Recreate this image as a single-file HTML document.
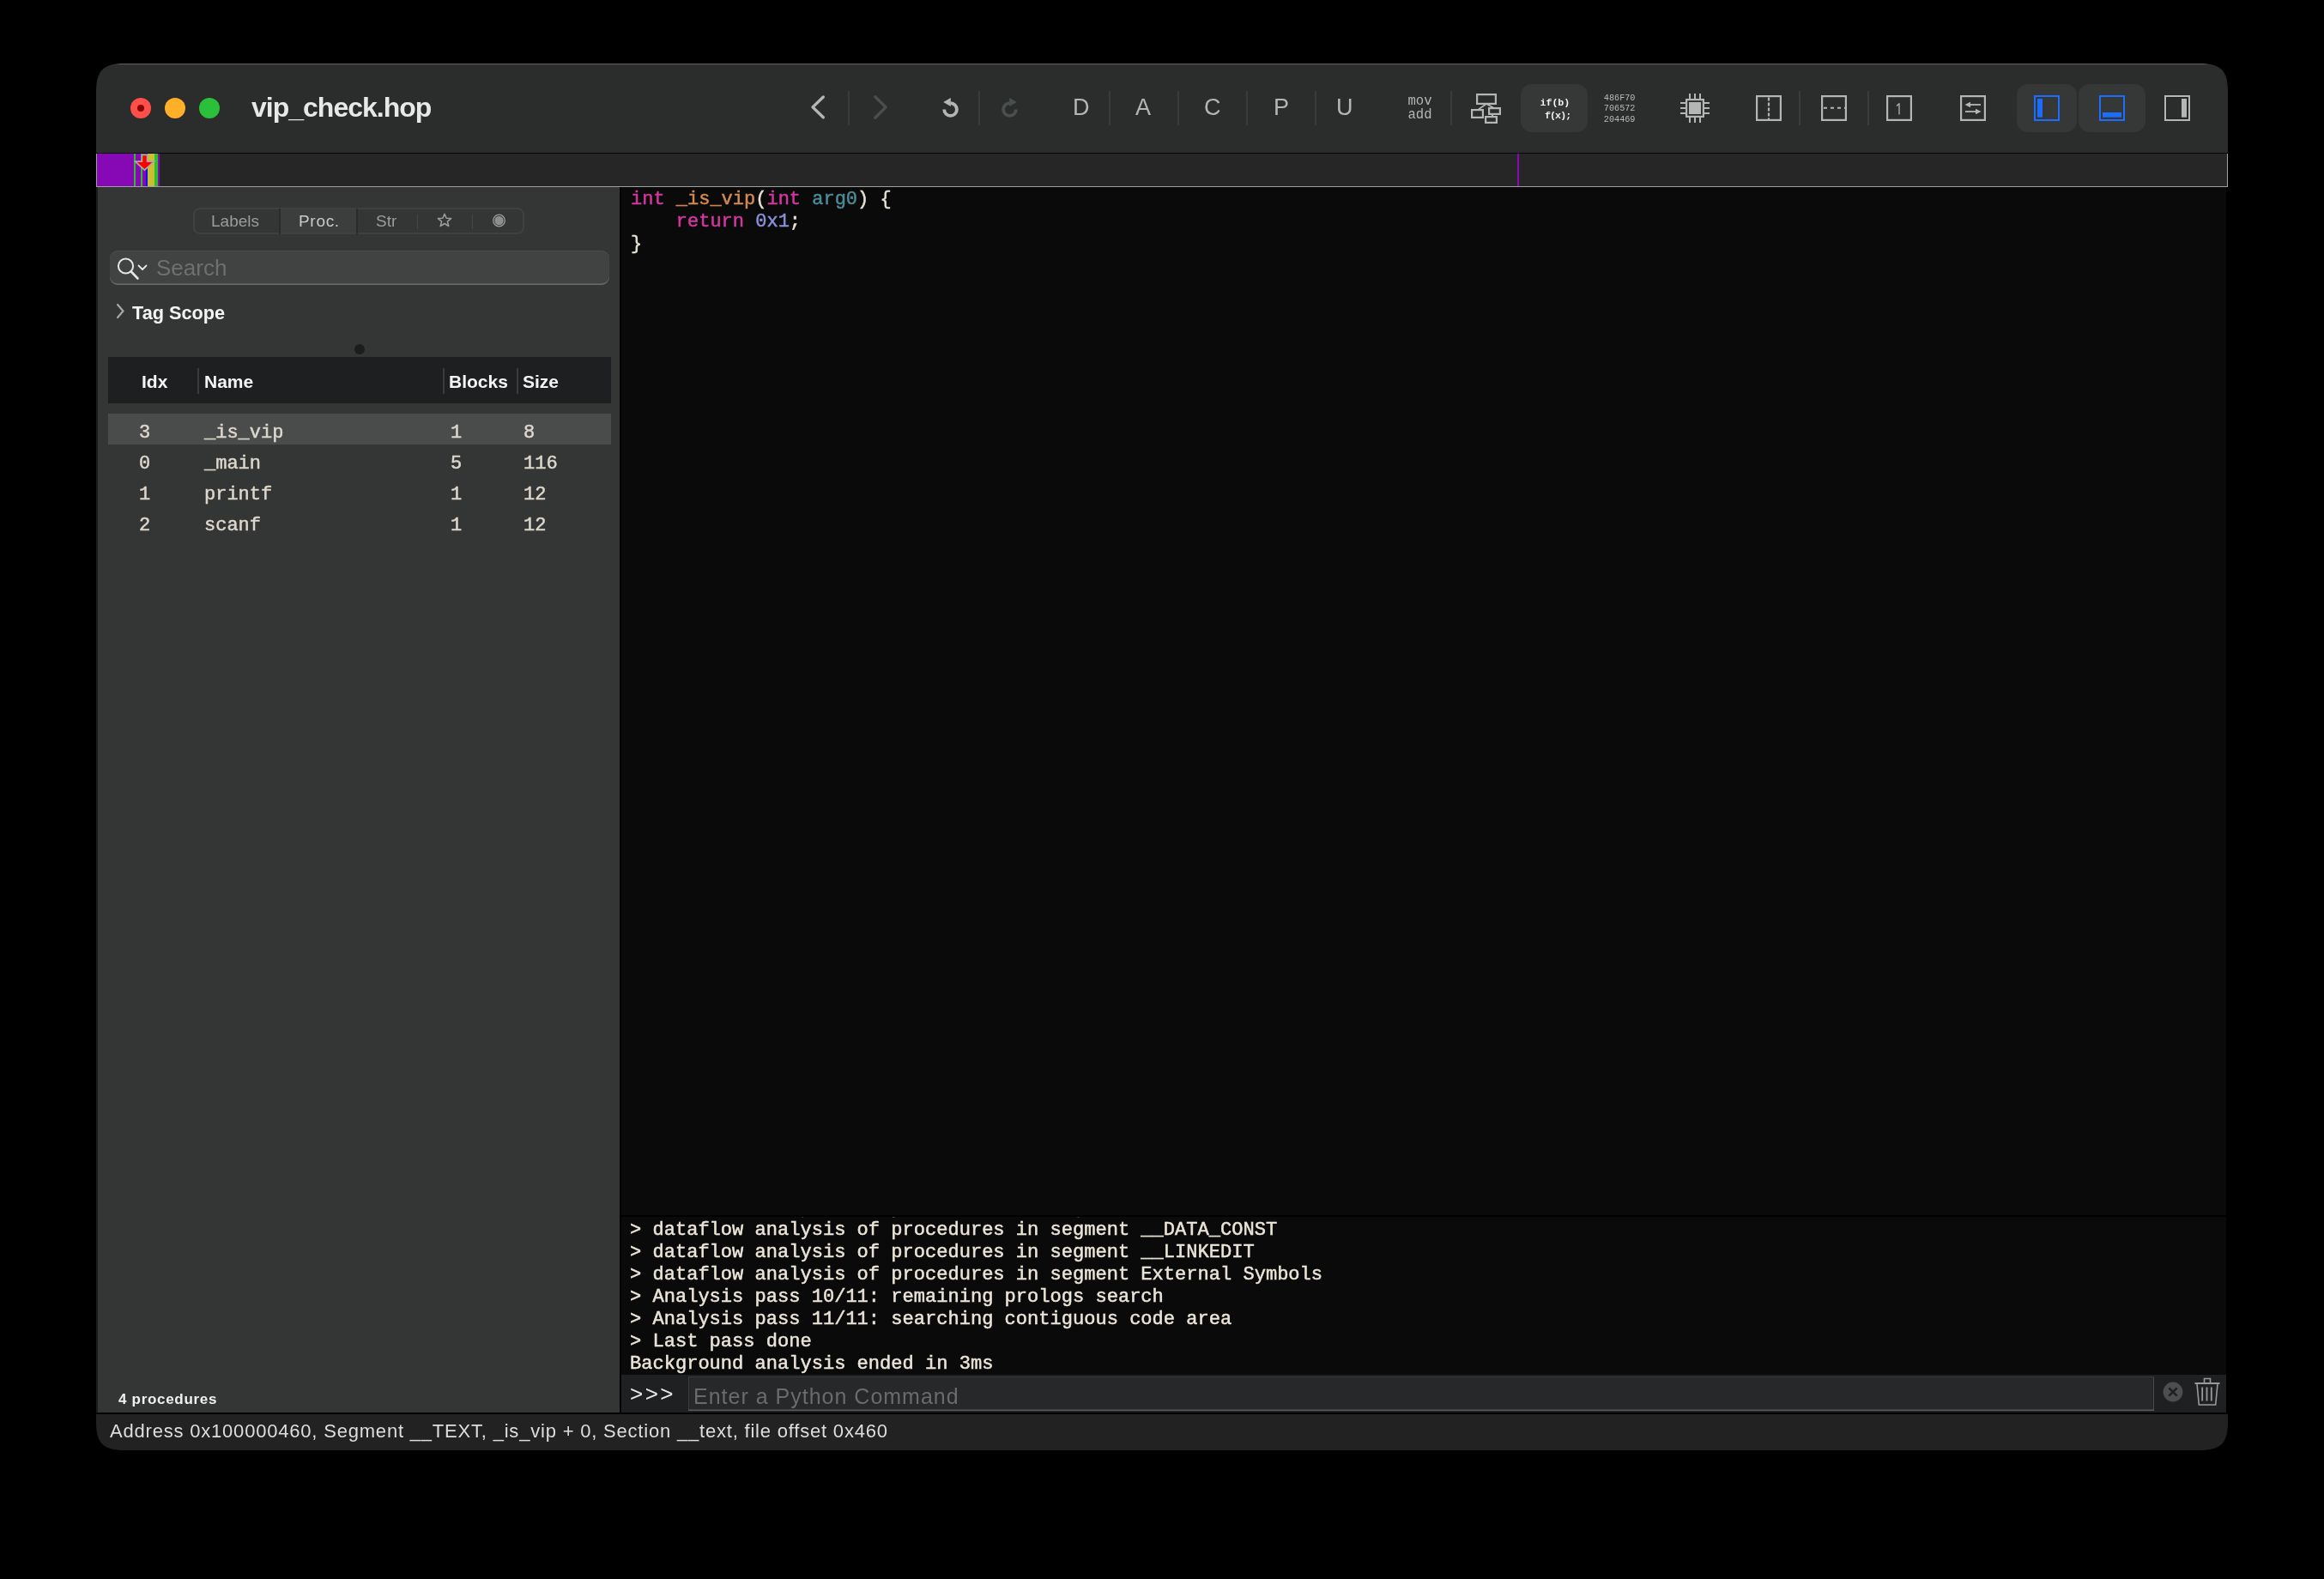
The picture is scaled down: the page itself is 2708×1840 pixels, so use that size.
<!DOCTYPE html>
<html><head><meta charset="utf-8"><style>
html,body{margin:0;padding:0;background:#000;width:2708px;height:1840px;overflow:hidden;}
body>div,body>svg{position:absolute;}
#win div,#win svg{position:absolute;}
</style></head><body>
<div id="win" style="left:0;top:0;width:2708px;height:1840px;will-change:transform;clip-path:path(&quot;M145,74 H2563 C2587.75,74 2596,82.25 2596,107 V1657 C2596,1681.75 2587.75,1690 2563,1690 H145 C120.25,1690 112,1681.75 112,1657 V107 C112,82.25 120.25,74 145,74 Z&quot;);">
<div style="left:112px;top:74px;width:2484px;height:1616px;background:#2b2c2c;"></div>
<div style="left:112px;top:178px;width:2484px;height:1px;background:#000;"></div>
<div style="left:112px;top:179px;width:2484px;height:39px;background:#262626;"></div>
<div style="left:112px;top:217px;width:2484px;height:1px;background:#a0a0a0;"></div>
<div style="left:112px;top:179px;width:1px;height:39px;background:#a0a0a0;"></div>
<div style="left:2595px;top:179px;width:1px;height:39px;background:#a0a0a0;"></div>
<div style="left:112px;top:218px;width:610px;height:1428px;background:#343535;"></div>
<div style="left:112px;top:218px;width:2px;height:1428px;background:#1c1c1d;"></div>
<div style="left:722px;top:218px;width:2px;height:1428px;background:#000;"></div>
<div style="left:724px;top:218px;width:1870px;height:1198px;background:#0a0a0a;"></div>
<div style="left:2594px;top:218px;width:2px;height:1430px;background:#000;"></div>
<div style="left:724px;top:1416px;width:1870px;height:2px;background:#000;"></div>
<div style="left:724px;top:1418px;width:1870px;height:184px;background:#0a0a0a;"></div>
<div style="left:724px;top:1602px;width:1870px;height:44px;background:#1f2022;"></div>
<div style="left:112px;top:1646px;width:2484px;height:2px;background:#000;"></div>
<div style="left:112px;top:1648px;width:2484px;height:42px;background:#222222;"></div>
<div style="left:152px;top:114px;width:24px;height:24px;border-radius:50%;background:#ff4f4b;"></div>
<div style="left:192px;top:114px;width:24px;height:24px;border-radius:50%;background:#ffb028;"></div>
<div style="left:232px;top:114px;width:24px;height:24px;border-radius:50%;background:#2bc03a;"></div>
<div style="left:160px;top:122px;width:8px;height:8px;border-radius:50%;background:#8a0000;"></div>
<div style="left:293px;top:100.91px;line-height:48px;font-family:'Liberation Sans', sans-serif;font-size:32px;font-weight:700;color:#e8e8e8;white-space:pre;letter-spacing:-1px;">vip_check.hop</div>
<div style="left:112px;top:74px;width:2484px;height:1616px;border-radius:20px;box-shadow:inset 0 1px 0 rgba(255,255,255,0.16), inset 0 2px 0 rgba(255,255,255,0.05);pointer-events:none;"></div>
<div style="left:113px;top:179px;width:43px;height:38px;background:#8708b5;"></div>
<div style="left:156px;top:179px;width:2px;height:38px;background:#2cbc2c;"></div>
<div style="left:158px;top:179px;width:6px;height:38px;background:#8708b5;"></div>
<div style="left:164px;top:179px;width:2px;height:38px;background:#2cbc2c;"></div>
<div style="left:166px;top:179px;width:4px;height:38px;background:#8708b5;"></div>
<div style="left:170px;top:179px;width:2px;height:38px;background:#1010e8;"></div>
<div style="left:172px;top:179px;width:8px;height:38px;background:#c8c032;"></div>
<div style="left:180px;top:179px;width:4px;height:38px;background:#2cbc2c;"></div>
<div style="left:184px;top:179px;width:2px;height:38px;background:#8708b5;"></div>
<div style="left:1768px;top:179px;width:2px;height:38px;background:#8708b5;"></div>
<svg style="position:absolute;left:156px;top:178px;" width="26" height="24" viewBox="0 0 26 24"><path d="M9.4 2.4 H15.6 V10.1 H23.6 L12.5 20.2 L1.4 10.1 H9.4 Z" fill="#ff0000" stroke="#a8a8a8" stroke-width="1.7" stroke-linejoin="miter"/></svg>
<div style="left:988px;top:106px;width:2px;height:40px;background:#3b3d3d;"></div>
<div style="left:1140px;top:106px;width:2px;height:40px;background:#3b3d3d;"></div>
<div style="left:1292px;top:106px;width:2px;height:40px;background:#3b3d3d;"></div>
<div style="left:1372px;top:106px;width:2px;height:40px;background:#3b3d3d;"></div>
<div style="left:1452px;top:106px;width:2px;height:40px;background:#3b3d3d;"></div>
<div style="left:1532px;top:106px;width:2px;height:40px;background:#3b3d3d;"></div>
<div style="left:1690px;top:106px;width:2px;height:40px;background:#3b3d3d;"></div>
<div style="left:2096px;top:106px;width:2px;height:40px;background:#3b3d3d;"></div>
<div style="left:2176px;top:106px;width:2px;height:40px;background:#3b3d3d;"></div>
<svg style="position:absolute;left:940px;top:106px;" width="26" height="38" viewBox="0 0 26 38"><path d="M19.3 7 L7 18.9 L19.3 30.8" fill="none" stroke="#b4b6b6" stroke-width="3.4" stroke-linecap="round" stroke-linejoin="round"/></svg>
<svg style="position:absolute;left:1013px;top:106px;" width="26" height="38" viewBox="0 0 26 38"><path d="M6.8 6.8 L19.1 18.9 L6.8 31.2" fill="none" stroke="#4b4e4f" stroke-width="3.4" stroke-linecap="round" stroke-linejoin="round"/></svg>
<svg style="position:absolute;left:1097px;top:107px;" width="28" height="34" viewBox="0 0 28 34"><g><path d="M3.2 20.5 A7.35 7.35 0 1 0 10.5 13.2" fill="none" stroke="#b4b6b6" stroke-width="3.8"/><path d="M10.8 7 L10.8 17 L2.2 12 Z" fill="#b4b6b6"/></g></svg>
<svg style="position:absolute;left:1159px;top:107px;" width="28" height="34" viewBox="0 0 28 34"><g transform="translate(28,0) scale(-1,1)"><path d="M3.2 20.5 A7.35 7.35 0 1 0 10.5 13.2" fill="none" stroke="#4b4e4f" stroke-width="3.8"/><path d="M10.8 7 L10.8 17 L2.2 12 Z" fill="#4b4e4f"/></g></svg>
<div style="left:1250px;top:104.64px;line-height:40px;font-family:'Liberation Sans', sans-serif;font-size:27px;font-weight:400;color:#b4b6b6;white-space:pre;">D</div>
<div style="left:1323px;top:104.64px;line-height:40px;font-family:'Liberation Sans', sans-serif;font-size:27px;font-weight:400;color:#b4b6b6;white-space:pre;">A</div>
<div style="left:1403px;top:104.64px;line-height:40px;font-family:'Liberation Sans', sans-serif;font-size:27px;font-weight:400;color:#b4b6b6;white-space:pre;">C</div>
<div style="left:1484px;top:104.64px;line-height:40px;font-family:'Liberation Sans', sans-serif;font-size:27px;font-weight:400;color:#b4b6b6;white-space:pre;">P</div>
<div style="left:1557px;top:104.64px;line-height:40px;font-family:'Liberation Sans', sans-serif;font-size:27px;font-weight:400;color:#b4b6b6;white-space:pre;">U</div>
<div style="left:1640.5px;top:106.95px;line-height:23px;font-family:'Liberation Mono', monospace;font-size:15.6px;font-weight:400;color:#b4b6b6;white-space:pre;">mov</div>
<div style="left:1640.5px;top:123.25px;line-height:23px;font-family:'Liberation Mono', monospace;font-size:15.6px;font-weight:400;color:#b4b6b6;white-space:pre;">add</div>
<svg style="position:absolute;left:1710px;top:104px;" width="42" height="44" viewBox="0 0 42 44"><g fill="none" stroke="#b4b6b6" stroke-width="2.2"><rect x="11.1" y="6.1" width="21.8" height="10.8"/><rect x="5.1" y="24.1" width="12.8" height="8.8"/><rect x="25.1" y="22.1" width="12.8" height="6.8"/><rect x="21.1" y="32.1" width="12.8" height="6.8"/><path d="M22 17 L12 24 M22 17 L31 22 M30 29 L28 32" stroke-width="1.6"/></g></svg>
<div style="left:1772px;top:98px;width:78px;height:56px;border-radius:13px;background:#363737;"></div>
<div style="left:1794.5px;top:111.41px;line-height:17px;font-family:'Liberation Mono', monospace;font-size:11.6px;font-weight:700;color:#f2f2f2;white-space:pre;">if(b)</div>
<div style="left:1800px;top:126.41px;line-height:17px;font-family:'Liberation Mono', monospace;font-size:11.6px;font-weight:700;color:#f2f2f2;white-space:pre;letter-spacing:-0.9px;">f(x);</div>
<div style="left:1868.8px;top:106.59px;line-height:15px;font-family:'Liberation Mono', monospace;font-size:10.2px;font-weight:400;color:#b8b8b8;white-space:pre;">486F70</div>
<div style="left:1868.8px;top:119.39px;line-height:15px;font-family:'Liberation Mono', monospace;font-size:10.2px;font-weight:400;color:#b8b8b8;white-space:pre;">706572</div>
<div style="left:1868.8px;top:132.19px;line-height:15px;font-family:'Liberation Mono', monospace;font-size:10.2px;font-weight:400;color:#b8b8b8;white-space:pre;">204469</div>
<svg style="position:absolute;left:1958px;top:109px;" width="34" height="34" viewBox="0 0 34 34"><g fill="#b4b6b6"><rect x="10" y="0" width="2" height="6"/><rect x="10" y="28" width="2" height="6"/><rect x="0" y="10" width="6" height="2"/><rect x="28" y="10" width="6" height="2"/><rect x="16" y="0" width="2" height="6"/><rect x="16" y="28" width="2" height="6"/><rect x="0" y="16" width="6" height="2"/><rect x="28" y="16" width="6" height="2"/><rect x="22" y="0" width="2" height="6"/><rect x="22" y="28" width="2" height="6"/><rect x="0" y="22" width="6" height="2"/><rect x="28" y="22" width="6" height="2"/><rect x="10" y="10" width="14" height="14"/></g><rect x="7.1" y="7.1" width="19.8" height="19.8" fill="none" stroke="#b4b6b6" stroke-width="2.2"/></svg>
<svg style="position:absolute;left:2045px;top:110px;" width="32" height="32" viewBox="0 0 32 32"><rect x="2.1" y="2.1" width="27.8" height="27.8" fill="none" stroke="#b4b6b6" stroke-width="2.2"/><path d="M16 3 V30" stroke="#b4b6b6" stroke-width="2.2" stroke-dasharray="4 2" stroke-dashoffset="-0.5"/></svg>
<svg style="position:absolute;left:2121px;top:110px;" width="32" height="32" viewBox="0 0 32 32"><rect x="2.1" y="2.1" width="27.8" height="27.8" fill="none" stroke="#b4b6b6" stroke-width="2.2"/><path d="M3 15.75 H30" stroke="#b4b6b6" stroke-width="2.2" stroke-dasharray="4 4" stroke-dashoffset="-1"/></svg>
<svg style="position:absolute;left:2197px;top:110px;" width="32" height="32" viewBox="0 0 32 32"><rect x="2.1" y="2.1" width="27.8" height="27.8" fill="none" stroke="#b4b6b6" stroke-width="2.2"/><path d="M13 13.5 L16 10.8 V23.6" fill="none" stroke="#b4b6b6" stroke-width="1.3" stroke-linejoin="round"/></svg>
<svg style="position:absolute;left:2283px;top:110px;" width="32" height="32" viewBox="0 0 32 32"><rect x="2.1" y="2.1" width="27.8" height="27.8" fill="none" stroke="#b4b6b6" stroke-width="2.2"/><g fill="#b4b6b6"><rect x="12" y="11.1" width="13" height="1.8"/><path d="M6.5 12 L13 8.8 V15.2 Z"/><rect x="7" y="19.1" width="13" height="1.8"/><path d="M25.5 20 L19 16.8 V23.2 Z"/></g></svg>
<div style="left:2350px;top:98px;width:70px;height:56px;border-radius:13px;background:#363737;"></div>
<div style="left:2422px;top:98px;width:78px;height:56px;border-radius:13px;background:#363737;"></div>
<svg style="position:absolute;left:2369px;top:110px;" width="32" height="32" viewBox="0 0 32 32"><rect x="2.1" y="2.1" width="27.8" height="27.8" fill="none" stroke="#1a6dff" stroke-width="2.2"/><rect x="3.7" y="3.7" width="24.6" height="24.6" fill="none" stroke="#3b3428" stroke-width="1"/><rect x="5" y="5" width="6" height="21.7" fill="#1a6dff"/></svg>
<svg style="position:absolute;left:2445px;top:110px;" width="32" height="32" viewBox="0 0 32 32"><rect x="2.1" y="2.1" width="27.8" height="27.8" fill="none" stroke="#1a6dff" stroke-width="2.2"/><rect x="3.7" y="3.7" width="24.6" height="24.6" fill="none" stroke="#3b3428" stroke-width="1"/><rect x="5" y="21" width="22" height="5.7" fill="#1a6dff"/></svg>
<svg style="position:absolute;left:2521px;top:110px;" width="32" height="32" viewBox="0 0 32 32"><rect x="2.1" y="2.1" width="27.8" height="27.8" fill="none" stroke="#b4b6b6" stroke-width="2.2"/><rect x="3.7" y="3.7" width="24.6" height="24.6" fill="none" stroke="#1e1f1f" stroke-width="1"/><rect x="21" y="5" width="6" height="21.7" fill="#b4b6b6"/></svg>
<div style="left:225px;top:242px;width:382px;height:27px;border:2px solid #3f4040;border-radius:8px;"></div>
<div style="left:327px;top:244px;width:88px;height:27px;background:#3c3d3d;"></div>
<div style="left:325px;top:243px;width:2px;height:30px;background:#2a2b2b;"></div>
<div style="left:415px;top:243px;width:2px;height:30px;background:#2a2b2b;"></div>
<div style="left:486px;top:250px;width:1px;height:17px;background:#444545;"></div>
<div style="left:550px;top:250px;width:1px;height:17px;background:#444545;"></div>
<div style="left:246px;top:243.51px;line-height:28px;font-family:'Liberation Sans', sans-serif;font-size:19px;font-weight:400;color:#9c9c9c;white-space:pre;">Labels</div>
<div style="left:348px;top:243.51px;line-height:28px;font-family:'Liberation Sans', sans-serif;font-size:19px;font-weight:400;color:#c9c9c9;white-space:pre;letter-spacing:0.7px;">Proc.</div>
<div style="left:438px;top:243.51px;line-height:28px;font-family:'Liberation Sans', sans-serif;font-size:19px;font-weight:400;color:#9c9c9c;white-space:pre;">Str</div>
<svg style="position:absolute;left:508px;top:247px;" width="20" height="20" viewBox="0 0 20 20"><path d="M10 2.2 L12.1 7.3 L17.6 7.6 L13.4 11.1 L14.8 16.5 L10 13.5 L5.2 16.5 L6.6 11.1 L2.4 7.6 L7.9 7.3 Z" fill="none" stroke="#9c9c9c" stroke-width="1.5" stroke-linejoin="round"/></svg>
<svg style="position:absolute;left:572px;top:247px;" width="20" height="20" viewBox="0 0 20 20"><circle cx="9.5" cy="10" r="6.8" fill="none" stroke="#9c9c9c" stroke-width="1.3"/><circle cx="9.5" cy="10" r="5.2" fill="#8e8e8e"/></svg>
<div style="left:128px;top:292px;width:582px;height:40px;border-radius:9px;background:#414242;box-shadow:inset 0 1px 0 #4c4d4d, inset 0 -1.5px 0 #6a6b6b;"></div>
<svg style="position:absolute;left:132px;top:296px;" width="46" height="34" viewBox="0 0 46 34"><circle cx="14.5" cy="14" r="8.6" fill="none" stroke="#e6e6e6" stroke-width="2"/><path d="M20.8 20.5 L28.5 28.5" stroke="#e6e6e6" stroke-width="2.6" stroke-linecap="round"/><path d="M29.5 13.5 L34 18 L38.5 13.5" fill="none" stroke="#e6e6e6" stroke-width="1.8" stroke-linecap="round" stroke-linejoin="round"/></svg>
<div style="left:182px;top:293.49px;line-height:39px;font-family:'Liberation Sans', sans-serif;font-size:26px;font-weight:400;color:#6f6f6f;white-space:pre;">Search</div>
<svg style="position:absolute;left:130px;top:350px;" width="20" height="26" viewBox="0 0 20 26"><path d="M7 5 L13.5 12.5 L7 20" fill="none" stroke="#a8a8a8" stroke-width="2.2" stroke-linecap="round" stroke-linejoin="round"/></svg>
<div style="left:154px;top:347.98px;line-height:33px;font-family:'Liberation Sans', sans-serif;font-size:21.7px;font-weight:700;color:#f4f4f4;white-space:pre;">Tag Scope</div>
<div style="left:413px;top:401px;width:12px;height:12px;border-radius:50%;background:#1c1c1c;"></div>
<div style="left:126px;top:416px;width:586px;height:54px;background:#1e1f21;"></div>
<div style="left:230px;top:429px;width:2px;height:30px;background:#3a3b3d;"></div>
<div style="left:516px;top:429px;width:2px;height:30px;background:#3a3b3d;"></div>
<div style="left:602px;top:429px;width:2px;height:30px;background:#3a3b3d;"></div>
<div style="left:165px;top:429.02px;line-height:32px;font-family:'Liberation Sans', sans-serif;font-size:21px;font-weight:700;color:#f4f4f4;white-space:pre;">Idx</div>
<div style="left:238px;top:429.02px;line-height:32px;font-family:'Liberation Sans', sans-serif;font-size:21px;font-weight:700;color:#f4f4f4;white-space:pre;">Name</div>
<div style="left:523px;top:429.02px;line-height:32px;font-family:'Liberation Sans', sans-serif;font-size:21px;font-weight:700;color:#f4f4f4;white-space:pre;">Blocks</div>
<div style="left:609px;top:429.02px;line-height:32px;font-family:'Liberation Sans', sans-serif;font-size:21px;font-weight:700;color:#f4f4f4;white-space:pre;">Size</div>
<div style="left:126px;top:482px;width:586px;height:36px;background:#4a4b4b;"></div>
<div style="left:162px;top:487.65px;line-height:33px;font-family:'Liberation Mono', monospace;font-size:22px;font-weight:400;color:#ddd7cd;white-space:pre;-webkit-text-stroke-width:0.5px;">3</div>
<div style="left:238px;top:487.65px;line-height:33px;font-family:'Liberation Mono', monospace;font-size:22px;font-weight:400;color:#ddd7cd;white-space:pre;-webkit-text-stroke-width:0.5px;">_is_vip</div>
<div style="left:525px;top:487.65px;line-height:33px;font-family:'Liberation Mono', monospace;font-size:22px;font-weight:400;color:#ddd7cd;white-space:pre;-webkit-text-stroke-width:0.5px;">1</div>
<div style="left:610px;top:487.65px;line-height:33px;font-family:'Liberation Mono', monospace;font-size:22px;font-weight:400;color:#ddd7cd;white-space:pre;-webkit-text-stroke-width:0.5px;">8</div>
<div style="left:162px;top:523.65px;line-height:33px;font-family:'Liberation Mono', monospace;font-size:22px;font-weight:400;color:#ddd7cd;white-space:pre;-webkit-text-stroke-width:0.5px;">0</div>
<div style="left:238px;top:523.65px;line-height:33px;font-family:'Liberation Mono', monospace;font-size:22px;font-weight:400;color:#ddd7cd;white-space:pre;-webkit-text-stroke-width:0.5px;">_main</div>
<div style="left:525px;top:523.65px;line-height:33px;font-family:'Liberation Mono', monospace;font-size:22px;font-weight:400;color:#ddd7cd;white-space:pre;-webkit-text-stroke-width:0.5px;">5</div>
<div style="left:610px;top:523.65px;line-height:33px;font-family:'Liberation Mono', monospace;font-size:22px;font-weight:400;color:#ddd7cd;white-space:pre;-webkit-text-stroke-width:0.5px;">116</div>
<div style="left:162px;top:559.65px;line-height:33px;font-family:'Liberation Mono', monospace;font-size:22px;font-weight:400;color:#ddd7cd;white-space:pre;-webkit-text-stroke-width:0.5px;">1</div>
<div style="left:238px;top:559.65px;line-height:33px;font-family:'Liberation Mono', monospace;font-size:22px;font-weight:400;color:#ddd7cd;white-space:pre;-webkit-text-stroke-width:0.5px;">printf</div>
<div style="left:525px;top:559.65px;line-height:33px;font-family:'Liberation Mono', monospace;font-size:22px;font-weight:400;color:#ddd7cd;white-space:pre;-webkit-text-stroke-width:0.5px;">1</div>
<div style="left:610px;top:559.65px;line-height:33px;font-family:'Liberation Mono', monospace;font-size:22px;font-weight:400;color:#ddd7cd;white-space:pre;-webkit-text-stroke-width:0.5px;">12</div>
<div style="left:162px;top:595.65px;line-height:33px;font-family:'Liberation Mono', monospace;font-size:22px;font-weight:400;color:#ddd7cd;white-space:pre;-webkit-text-stroke-width:0.5px;">2</div>
<div style="left:238px;top:595.65px;line-height:33px;font-family:'Liberation Mono', monospace;font-size:22px;font-weight:400;color:#ddd7cd;white-space:pre;-webkit-text-stroke-width:0.5px;">scanf</div>
<div style="left:525px;top:595.65px;line-height:33px;font-family:'Liberation Mono', monospace;font-size:22px;font-weight:400;color:#ddd7cd;white-space:pre;-webkit-text-stroke-width:0.5px;">1</div>
<div style="left:610px;top:595.65px;line-height:33px;font-family:'Liberation Mono', monospace;font-size:22px;font-weight:400;color:#ddd7cd;white-space:pre;-webkit-text-stroke-width:0.5px;">12</div>
<div style="left:138px;top:1618.11px;line-height:26px;font-family:'Liberation Sans', sans-serif;font-size:17px;font-weight:700;color:#f0f0f0;white-space:pre;letter-spacing:0.7px;">4 procedures</div>
<div style="left:735px;top:215.65px;line-height:33px;font-family:'Liberation Mono', monospace;font-size:22px;font-weight:400;color:#e6e1d6;white-space:pre;-webkit-text-stroke-width:0.5px;"><span style="color:#d3379f">int</span> <span style="color:#d38a52">_is_vip</span><span style="color:#e6e1d6">(</span><span style="color:#d3379f">int</span> <span style="color:#4b8c97">arg0</span><span style="color:#e6e1d6">) {</span></div>
<div style="left:735px;top:241.65px;line-height:33px;font-family:'Liberation Mono', monospace;font-size:22px;font-weight:400;color:#e6e1d6;white-space:pre;-webkit-text-stroke-width:0.5px;">    <span style="color:#d3379f">return</span> <span style="color:#8b90d8">0x1</span><span style="color:#e6e1d6">;</span></div>
<div style="left:735px;top:267.65px;line-height:33px;font-family:'Liberation Mono', monospace;font-size:22px;font-weight:400;color:#e6e1d6;white-space:pre;-webkit-text-stroke-width:0.5px;">}</div>
<div style="left:734px;top:1391.43px;line-height:33px;font-family:'Liberation Mono', monospace;font-size:22.05px;font-weight:400;color:#ebe4d8;white-space:pre;-webkit-text-stroke-width:0.5px;clip-path:inset(26.55px 0 0 0);">> dataflow analysis of procedures in segment __DATA</div>
<div style="left:734px;top:1417.43px;line-height:33px;font-family:'Liberation Mono', monospace;font-size:22.05px;font-weight:400;color:#ebe4d8;white-space:pre;-webkit-text-stroke-width:0.5px;">> dataflow analysis of procedures in segment __DATA_CONST</div>
<div style="left:734px;top:1443.43px;line-height:33px;font-family:'Liberation Mono', monospace;font-size:22.05px;font-weight:400;color:#ebe4d8;white-space:pre;-webkit-text-stroke-width:0.5px;">> dataflow analysis of procedures in segment __LINKEDIT</div>
<div style="left:734px;top:1469.43px;line-height:33px;font-family:'Liberation Mono', monospace;font-size:22.05px;font-weight:400;color:#ebe4d8;white-space:pre;-webkit-text-stroke-width:0.5px;">> dataflow analysis of procedures in segment External Symbols</div>
<div style="left:734px;top:1495.43px;line-height:33px;font-family:'Liberation Mono', monospace;font-size:22.05px;font-weight:400;color:#ebe4d8;white-space:pre;-webkit-text-stroke-width:0.5px;">> Analysis pass 10/11: remaining prologs search</div>
<div style="left:734px;top:1521.43px;line-height:33px;font-family:'Liberation Mono', monospace;font-size:22.05px;font-weight:400;color:#ebe4d8;white-space:pre;-webkit-text-stroke-width:0.5px;">> Analysis pass 11/11: searching contiguous code area</div>
<div style="left:734px;top:1547.43px;line-height:33px;font-family:'Liberation Mono', monospace;font-size:22.05px;font-weight:400;color:#ebe4d8;white-space:pre;-webkit-text-stroke-width:0.5px;">> Last pass done</div>
<div style="left:734px;top:1573.43px;line-height:33px;font-family:'Liberation Mono', monospace;font-size:22.05px;font-weight:400;color:#ebe4d8;white-space:pre;-webkit-text-stroke-width:0.5px;">Background analysis ended in 3ms</div>
<div style="left:734px;top:1605.49px;line-height:39px;font-family:'Liberation Sans', sans-serif;font-size:26px;font-weight:400;color:#e8e8e8;white-space:pre;letter-spacing:2.5px;">&gt;&gt;&gt;</div>
<div style="left:802px;top:1604px;width:1708px;height:40px;background:#27282a;box-shadow:inset 0 1px 0 #38393b, inset 0 -1.5px 0 #5a5b5c, inset 1px 0 0 #3a3b3d, inset -1px 0 0 #4a4b4d;"></div>
<div style="left:808px;top:1607.63px;line-height:38px;font-family:'Liberation Sans', sans-serif;font-size:25px;font-weight:400;color:#6b6b6b;white-space:pre;letter-spacing:1.0px;">Enter a Python Command</div>
<svg style="position:absolute;left:2520px;top:1610px;" width="24" height="24" viewBox="0 0 24 24"><circle cx="12" cy="12" r="11.4" fill="#4d4e4f"/><path d="M7.3 7.3 L16.7 16.7 M16.7 7.3 L7.3 16.7" stroke="#1f2022" stroke-width="2.6"/></svg>
<svg style="position:absolute;left:2556px;top:1604px;" width="32" height="36" viewBox="0 0 32 36"><g fill="none" stroke="#9a9a9a"><path d="M1.5 8 H30.5" stroke-width="2"/><path d="M12.5 7.5 V2.5 H19.5 V7.5" stroke-width="1.6"/><path d="M4 8.5 L6.3 33 H25.7 L28 8.5" stroke-width="1.6"/><path d="M10.2 12.5 V28.5 M15.5 12.5 V28.5 M20.8 12.5 V28.5" stroke-width="1.8"/></g></svg>
<div style="left:128px;top:1651.37px;line-height:33px;font-family:'Liberation Sans', sans-serif;font-size:22px;font-weight:400;color:#dedede;white-space:pre;letter-spacing:0.8px;">Address 0x100000460, Segment __TEXT, _is_vip + 0, Section __text, file offset 0x460</div>
</div></body></html>
